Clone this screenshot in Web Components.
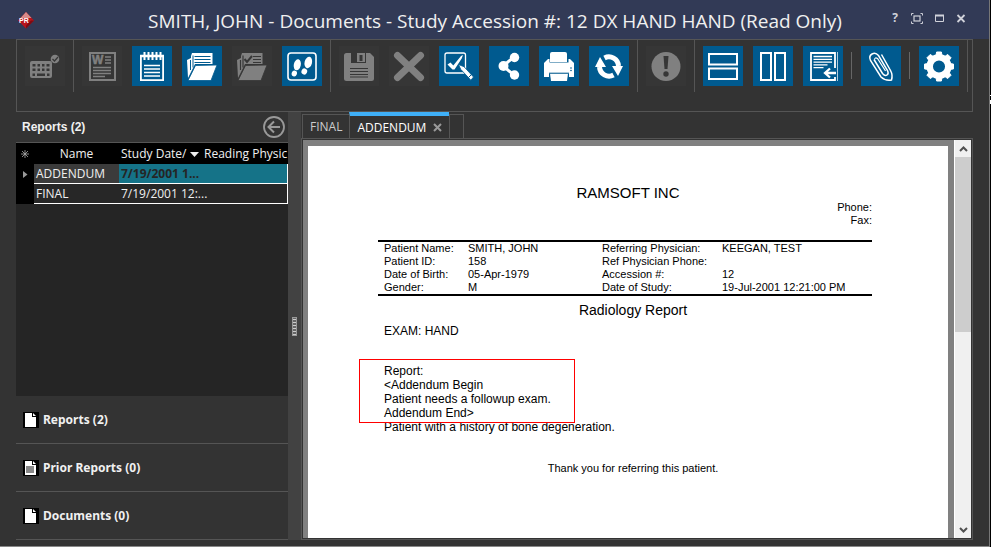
<!DOCTYPE html>
<html lang="en">
<head>
<meta charset="utf-8">
<title>SMITH, JOHN - Documents</title>
<style>
html, body { margin: 0; height: 100%; background: #000; }
body { font-family: "Open Sans", "Noto Sans", sans-serif; color: #f0f0f0; }
</style>
</head>
<body>
<document-window></document-window>

<script>
const define = (name, html, init) => {
  const template = document.createElement('template');
  template.innerHTML = html;
  customElements.define(name, class extends HTMLElement {
    constructor() {
      super();
      this.attachShadow({ mode: 'open' }).append(template.content.cloneNode(true));
    }
    connectedCallback() {
      if (init) init(this, this.shadowRoot);
    }
  });
};

/* Toolbar glyphs on a 40 x 40 grid; var(--bg) is the button's own fill. */
const ICONS = {
  keyboard: `<rect x="5" y="15" width="22" height="17" rx="2" fill="currentColor"/>
    <path d="M7.500 18h3v2.500h-3zM12.500 18h2.500v2.500h-2.500zM17 18h2.500v2.500h-2.500zM21.500 18h3v2.500h-3zM7.500 22.500h3V25h-3zM12.500 22.500h2.500V25h-2.500zM17 22.500h2.500V25h-2.500zM21.500 22.500h3V25h-3zM7.500 27.500h2.500V30h-2.500zM12 27.500h8V30h-8zM22 27.500h2.500V30h-2.500z" fill="var(--bg)"/>
    <circle cx="30" cy="13" r="4.300" fill="currentColor"/><path d="M27.500 13l2 2 3.500-4" fill="none" stroke="var(--bg)" stroke-width="1.200"/>`,
  word: `<rect x="8" y="7" width="25" height="27" fill="none" stroke="currentColor" stroke-width="2"/>
    <text x="10" y="18" font-family="Liberation Sans, sans-serif" font-weight="700" font-size="12" fill="currentColor" stroke="currentColor" stroke-width=".5">W</text>
    <path d="M23 11h6M23 14h6M23 17h6M11 21.500h18M11 24.500h18M11 27.500h18M11 30.500h12" stroke="currentColor" stroke-width="1.500"/>`,
  notepad: `<path d="M8.900 9v25.100h22.200V9" fill="none" stroke="currentColor" stroke-width="1.800"/><path d="M8 10h24" stroke="currentColor" stroke-width="2.500"/>
    <path d="M12.500 6v8M16.500 6v8M20.500 6v8M24.500 6v8M28.500 6v8" stroke="currentColor" stroke-width="2"/>
    <path d="M12 19.500h16M12 23h16M12 26.500h16M12 30h16" stroke="currentColor" stroke-width="1.500"/>`,
  folder: `<path d="M5 14l4-2v-2l1-3h20.500v11H13L6 32z" fill="currentColor"/>
    <path d="M8.500 14v10M11 9.500v12M12.500 10.500h16M12.500 13.500h16M12.500 16.500h16" stroke="var(--bg)" stroke-width="1"/>
    <path d="M6 34.500l7.500-15 21.500-.5-6 15.500z" fill="currentColor" stroke="var(--bg)" stroke-width=".8"/>`,
  foldercheck: `<path d="M5 14l4-2v-2l1-3h20.500v11H13L6 32z" fill="currentColor"/>
    <path d="M8.500 14v10M11 9.500v12M21 10.500h8M21 13.500h8M21 16.500h8" stroke="var(--bg)" stroke-width="1.200"/><path d="M12.500 13l2.500 3 5-6" fill="none" stroke="var(--bg)" stroke-width="2"/>
    <path d="M6 34.500l7.500-15 21.500-.5-6 15.500z" fill="currentColor" stroke="var(--bg)" stroke-width=".8"/>`,
  steps: `<rect x="6" y="7" width="28" height="27" rx="3" fill="none" stroke="currentColor" stroke-width="1.600"/>
    <g fill="currentColor"><ellipse cx="15.300" cy="18.800" rx="3.500" ry="5.600" transform="rotate(12 15.300 18.800)"/><ellipse cx="12.300" cy="27.500" rx="2.600" ry="3" transform="rotate(20 12.300 27.500)"/>
    <ellipse cx="26.300" cy="16.500" rx="3.700" ry="5.800" transform="rotate(14 26.300 16.500)"/><ellipse cx="22.300" cy="25.500" rx="2.800" ry="3.100" transform="rotate(24 22.300 25.500)"/></g>`,
  save: `<path d="M7.500 7H12v10h15V7h4L35 11v21.500q0 2.500-2.500 2.500h-25Q5 35 5 32.500v-23Q5 7 7.500 7z" fill="currentColor"/>
    <rect x="18" y="7" width="8" height="9" fill="currentColor"/><rect x="20.500" y="9" width="3" height="6" fill="var(--bg)"/>
    <path d="M11 22.500h18M11 25.500h18M11 28.500h18M11 31h18" stroke="var(--bg)" stroke-width="1.200"/>`,
  cross: `<path d="M8.500 9.500l23 22M31.500 9.500l-23 22" stroke="currentColor" stroke-width="7" stroke-linecap="round"/>`,
  review: `<rect x="6" y="7" width="20.500" height="20" rx="2" fill="none" stroke="currentColor" stroke-width="1.300"/>
    <path d="M8.500 18.500l3-2 2.800 3L22 10l2-1-1.300 3.500-7.200 11h-2z" fill="currentColor"/>
    <path d="M19.500 18.500l5.500 2.200 9.500 10.300-2.600 3.200L21.700 23.300z" fill="currentColor" stroke="var(--bg)" stroke-width=".8"/><path d="M29.500 31.500l3-3" stroke="var(--bg)" stroke-width="1"/>`,
  share: `<path d="M25 11L14 20l11 9" fill="none" stroke="currentColor" stroke-width="3"/><g fill="currentColor"><circle cx="25.500" cy="11.500" r="4.700"/><circle cx="14.500" cy="20" r="5"/><circle cx="25.500" cy="29" r="4.700"/></g>`,
  print: `<path d="M11 16V8q0-2 2-2h13q2 0 2 2v8z" fill="currentColor"/>
    <path d="M5 31V17l4-4h1.500v3.500h19V13H31l4 4v14h-5v-3.500H10V31z" fill="currentColor"/><path d="M11 27.500h18l-1 7.500H12z" fill="currentColor"/><path d="M10 27.200h20" stroke="var(--bg)"/>
    <circle cx="32" cy="22" r=".8" fill="var(--bg)"/><circle cx="32" cy="24.500" r=".8" fill="var(--bg)"/>`,
  refresh: `<path d="M15.500 12A9.600 9.600 0 0 1 29.500 20M24.500 29A9.600 9.600 0 0 1 10.500 21" fill="none" stroke="currentColor" stroke-width="5"/>
    <path d="M11 11L6 21h11zM29 30l5-10H23z" fill="currentColor"/>`,
  alert: `<circle cx="20" cy="20.500" r="14.500" fill="currentColor"/><path d="M17.500 10h5l-1 13h-3z" fill="var(--bg)"/><circle cx="20" cy="28" r="2.700" fill="var(--bg)"/>`,
  rows: `<path d="M6 8h28v10.500H6zM6 22.500h28V33H6z" fill="none" stroke="currentColor" stroke-width="2"/>`,
  columns: `<path d="M8 7h10v27H8zM22 7h10v27H22z" fill="none" stroke="currentColor" stroke-width="2"/>`,
  import: `<path d="M32 22V7H8v27h24v-3" fill="none" stroke="currentColor" stroke-width="1.800"/><path d="M34.500 6v29" stroke="currentColor" stroke-width=".7"/>
    <path d="M10.500 10.500h18.500M10.500 13.300h18.500M10.500 16.100h18.500M10.500 18.900h14M10.500 21.700h10" stroke="currentColor" stroke-width="1.300"/>
    <path d="M33 27H22.500M27 22.500L22 27l5 4.500" fill="none" stroke="currentColor" stroke-width="2.300"/>`,
  clip: `<path d="M13 13.500l8.500 14q2.500 3 4.500 1.500t.5-4.500L17.500 9.500Q14.500 6 11 8t-1.500 6.500L20 31q4 4 10.500 3 1.500-5-1-9.500L20.500 8.500" fill="none" stroke="currentColor" stroke-width="1.500"/>
    <path d="M13.500 13.500q.5-2.500 3-1l8 12.500" fill="none" stroke="currentColor" stroke-width="1.200"/>`,
  gear: `<circle cx="20" cy="20.500" r="9.300" fill="none" stroke="currentColor" stroke-width="6.500"/>
    <path d="M17 10l.6-4h4.800l.6 4zM17 31l.6 4h4.800l.6-4zM9.500 17.500l-4 .6v4.800l4 .6zM30.500 17.500l4 .6v4.800l-4 .6zM10.300 15l-2.400-3.200 3.400-3.400 3.200 2.400zM29.700 15l2.400-3.200-3.400-3.400-3.200 2.400zM10.300 26l-2.400 3.200 3.400 3.400 3.200-2.400zM29.700 26l2.400 3.200-3.400 3.400-3.200-2.400z" fill="currentColor" stroke="currentColor"/>`
};

define('tool-button', `
<style>
:host { display: block; width: 40px; height: 40px; --bg: #005a8f; color: #fff; }
:host([disabled]) { --bg: #363636; color: #808080; }
button { display: block; width: 100%; height: 100%; padding: 0; border: 0; background: var(--bg); color: inherit; }
svg { display: block; width: 40px; height: 40px; }
</style>
<button type="button"><svg viewBox="0 0 40 40" aria-hidden="true"></svg></button>`,
(host, root) => {
  root.querySelector('svg').innerHTML = ICONS[host.getAttribute('icon')];
  const button = root.querySelector('button');
  button.setAttribute('aria-label', host.getAttribute('label'));
  button.disabled = host.hasAttribute('disabled');
});

define('tool-group', `
<style>
:host { display: flex; gap: 10px; height: 46px; padding: 6px 8px 0; border-right: 1px solid #555; }
</style><slot></slot>`);

define('tool-divider', `
<style>
:host { display: block; width: 1px; height: 27px; margin: 6px -1px 0 -2px; background: #666; }
</style>`);

define('tool-ribbon', `
<style>
:host { display: flex; height: 71px; border: 1px solid #555; overflow: hidden; }
</style>
<tool-group><tool-button icon="keyboard" label="Dictation keys" disabled></tool-button></tool-group>
<tool-group>
  <tool-button icon="word" label="Open in Word" disabled></tool-button>
  <tool-button icon="notepad" label="Notes"></tool-button>
  <tool-button icon="folder" label="Open study"></tool-button>
  <tool-button icon="foldercheck" label="Complete study" disabled></tool-button>
  <tool-button icon="steps" label="Workflow"></tool-button>
</tool-group>
<tool-group>
  <tool-button icon="save" label="Save" disabled></tool-button>
  <tool-button icon="cross" label="Delete" disabled></tool-button>
  <tool-button icon="review" label="Sign"></tool-button>
  <tool-button icon="share" label="Share"></tool-button>
  <tool-button icon="print" label="Print"></tool-button>
  <tool-button icon="refresh" label="Refresh"></tool-button>
</tool-group>
<tool-group><tool-button icon="alert" label="Priority" disabled></tool-button></tool-group>
<tool-group>
  <tool-button icon="rows" label="Split rows"></tool-button>
  <tool-button icon="columns" label="Split columns"></tool-button>
  <tool-button icon="import" label="Import"></tool-button>
  <tool-divider></tool-divider>
  <tool-button icon="clip" label="Attach"></tool-button>
  <tool-divider></tool-divider>
  <tool-button icon="gear" label="Settings"></tool-button>
</tool-group>`);

define('title-bar', `
<style>
:host { display: grid; grid-template-columns: 1fr auto 1fr; align-items: center; height: 39px; padding: 0 20px 0 17px; background: #323a56; }
h1 { margin: 0; font-size: 19px; line-height: 28px; font-weight: 400; padding: 2px 0 0 4px; white-space: nowrap; }
.logo { display: block; width: 18px; height: 18px; }
.controls { display: flex; justify-content: flex-end; gap: 6px; padding-bottom: 3px; }
.controls button { display: block; width: 16px; height: 16px; padding: 0; border: 0; background: none; color: #d0d2da; font: 700 12px/16px "Open Sans", sans-serif; }
.controls svg { display: block; width: 16px; height: 16px; }
</style>
<svg class="logo" viewBox="0 0 18 18" aria-hidden="true">
  <path d="M9 1l8 8.500L9 17.500 1 9.500z" fill="#b8141c"/><path d="M9 1l5.500 6H3.500z" fill="#d88a88"/><path d="M9 17.500l8-8-3 0-5 5z" fill="#7d0b12"/>
  <text x="2" y="12" font-family="Liberation Sans, sans-serif" font-size="7" font-weight="700" fill="#fff">PR</text>
</svg>
<h1>SMITH, JOHN - Documents - Study Accession #: 12 DX HAND HAND (Read Only)</h1>
<div class="controls">
  <button type="button" aria-label="Help">?</button>
  <button type="button" aria-label="Full screen"><svg viewBox="0 0 16 16" fill="none" stroke="currentColor"><path d="M4.500 3.500h-2v2M11.500 3.500h2v2M4.500 13.500h-2v-2M11.500 13.500h2v-2"/><rect x="5" y="6" width="6" height="5" stroke-width="1.200"/></svg></button>
  <button type="button" aria-label="Maximize"><svg viewBox="0 0 16 16" fill="none" stroke="currentColor"><path d="M4.500 5.500h8v6h-8z"/><path d="M4 5.500h9" stroke-width="2"/></svg></button>
  <button type="button" aria-label="Close"><svg viewBox="0 0 16 16" stroke="currentColor" stroke-width="1.800"><path d="M4.500 5l7 7M11.500 5l-7 7"/></svg></button>
</div>`);

define('panel-header', `
<style>
:host { display: flex; align-items: center; justify-content: space-between; height: 30px; padding: 0 3px 0 6px; border-bottom: 1px solid #555; }
h2 { margin: 0; font: 700 12px/16px "Liberation Sans", sans-serif; }
button { display: block; padding: 0; border: 0; background: none; color: #999; }
svg { display: block; width: 22px; height: 22px; }
</style>
<h2><slot></slot></h2>
<button type="button" aria-label="Collapse panel"><svg viewBox="0 0 22 22" fill="none" stroke="currentColor"><circle cx="11" cy="11" r="10" stroke-width="1.800"/><path d="M17 11H6M11 5.500L5.500 11l5.500 5.500" stroke-width="2"/></svg></button>`);

define('report-grid', `
<style>
:host { display: block; flex: 1; background: #252525; }
table { width: 100%; table-layout: fixed; border-collapse: separate; border-spacing: 0; font-size: 12px; line-height: 18px; }
th, td { height: 19px; padding: 0 0 0 2px; font-weight: 400; text-align: left; white-space: nowrap; box-sizing: border-box; }
thead th { height: 21px; background: #000; }
thead th:last-child { padding-left: 1px; }
thead .name { text-align: center; padding: 0; }
tbody th, .mark { background: #000; text-align: center; padding: 0; color: #aaa; }
tbody td { height: 20px; border-bottom: 1px solid #fff; background: #272727; }
tbody td:last-child { border-right: 1px solid #fff; }
.active td { background: #157388; }
.active td.first { background: #3b3b3b; }
.active .date { color: #252525; font-weight: 700; }
svg { vertical-align: middle; }
</style>
<table>
  <colgroup><col style="width:18px"><col style="width:85px"><col style="width:84px"><col></colgroup>
  <thead><tr>
    <th class="mark" aria-label="Row state"><svg width="8" height="8" viewBox="0 0 8 8" stroke="#aaa" stroke-width=".8"><path d="M4 0v8M0 4h8M1 1l6 6M7 1L1 7"/></svg></th>
    <th class="name">Name</th>
    <th>Study Date/ <svg width="9" height="5" viewBox="0 0 9 5"><path d="M0 0h9L4.500 5z" fill="#eee"/></svg></th>
    <th>Reading Physic</th>
  </tr></thead>
  <tbody>
    <tr class="active"><th aria-label="Current row"><svg width="5" height="7" viewBox="0 0 5 7"><path d="M0 0l4.500 3.500L0 7z" fill="#999"/></svg></th><td class="first">ADDENDUM</td><td class="date">7/19/2001 1...</td><td></td></tr>
    <tr><th aria-label="Row"></th><td class="first">FINAL</td><td class="date">7/19/2001 12:...</td><td></td></tr>
  </tbody>
</table>`);

define('nav-item', `
<style>
:host { display: block; border-bottom: 1px solid #555; }
button { display: flex; align-items: center; gap: 4px; width: 100%; height: 47px; padding: 0 7px; border: 0; background: none; color: inherit; font: 700 12px/16px "Noto Sans", sans-serif; text-align: left; }
svg { display: block; width: 16px; height: 16px; }
.fill { display: none; }
:host([filled]) .fill { display: block; }
</style>
<button type="button"><svg viewBox="0 0 16 16" aria-hidden="true"><path d="M0 0h16v16H0z" fill="#000"/><path d="M2 1h7v4h4v10H2z" fill="#fff"/><path d="M10 1l3 3h-3z" fill="#fff"/><path class="fill" d="M3 6h8v7H3z" fill="#888"/></svg><slot></slot></button>`);

define('side-panel', `
<style>
:host { display: flex; flex-direction: column; }
</style>
<panel-header>Reports (2)</panel-header>
<report-grid></report-grid>
<nav>
  <nav-item>Reports (2)</nav-item>
  <nav-item filled>Prior Reports (0)</nav-item>
  <nav-item>Documents (0)</nav-item>
</nav>`);

define('split-handle', `
<style>
:host { display: flex; align-items: center; justify-content: center; background: #424242; }
i { display: block; width: 3px; height: 17px; border: 1px solid #999; background: repeating-linear-gradient(#666 0 1px, #ccc 1px 2px, #666 2px 3px); }
</style><i></i>`);

define('tab-strip', `
<style>
:host { display: flex; height: 26px; padding-left: 1px; }
.tab, .stub { box-sizing: border-box; border: 1px solid #555; border-bottom: 0; border-right: 0; margin-top: 2px; }
.tab { display: flex; align-items: center; padding: 0 7px; }
.stub { width: 15px; border-right: 1px solid #555; }
.on { margin: 0 0 -1px; border-top: 4px solid #3fb0f8; background: #333; }
.on .name { color: #fff; }
button { display: block; padding: 0; border: 0; background: none; color: #ccc; font: 400 12px/20px "Open Sans", sans-serif; }
.close { margin-left: 7px; color: #999; }
svg { display: block; width: 9px; height: 9px; }
</style>
<div class="tab"><button type="button" class="name">FINAL</button></div>
<div class="tab on"><button type="button" class="name">ADDENDUM</button><button type="button" class="close" aria-label="Close tab"><svg viewBox="0 0 9 9" stroke="currentColor" stroke-width="2"><path d="M1 1l7 7M8 1L1 8"/></svg></button></div>
<div class="stub"></div>`);

define('report-page', `
<style>
:host { display: block; background: #fff; color: #000; padding: 38px 76px 0 70px; font: 11px/13px "Liberation Sans", sans-serif; overflow: hidden; }
h3, h4, p { margin: 0; font-weight: 400; }
h3, h4 { text-align: center; }
h3 { font-size: 15px; line-height: 17px; padding-left: 6px; }
h4 { font-size: 14px; line-height: 18px; padding: 5px 0 5px 16px; }
.contact { text-align: right; padding-bottom: 13px; }
table { width: 100%; table-layout: fixed; border-collapse: collapse; border-top: 2px solid #000; border-bottom: 2px solid #000; }
th, td { padding: 0; text-align: left; font-weight: 400; white-space: nowrap; }
th:first-child { padding-left: 6px; }
.text { padding-left: 6px; font-size: 12px; line-height: 14px; }
.body { position: relative; margin-top: 26px; }
.mark { position: absolute; left: -25px; top: -5px; width: 214px; height: 62px; border: 1px solid #f00; }
.thanks { text-align: center; margin-top: 28px; padding-left: 16px; }
</style>
<h3>RAMSOFT INC</h3>
<p class="contact">Phone:<br>Fax:</p>
<table>
  <colgroup><col style="width:90px"><col style="width:134px"><col style="width:120px"><col></colgroup>
  <tr><th>Patient Name:</th><td>SMITH, JOHN</td><th>Referring Physician:</th><td>KEEGAN, TEST</td></tr>
  <tr><th>Patient ID:</th><td>158</td><th>Ref Physician Phone:</th><td></td></tr>
  <tr><th>Date of Birth:</th><td>05-Apr-1979</td><th>Accession #:</th><td>12</td></tr>
  <tr><th>Gender:</th><td>M</td><th>Date of Study:</th><td>19-Jul-2001 12:21:00 PM</td></tr>
</table>
<h4>Radiology Report</h4>
<div class="text">
  <p>EXAM: HAND</p>
  <div class="body">
    <span class="mark"></span>
    <p>Report:</p>
    <p>&lt;Addendum Begin</p>
    <p>Patient needs a followup exam.</p>
    <p>Addendum End&gt;</p>
    <p>Patient with a history of bone degeneration.</p>
  </div>
</div>
<p class="thanks">Thank you for referring this patient.</p>`);

define('page-scrollbar', `
<style>
:host { display: flex; flex-direction: column; justify-content: space-between; box-sizing: border-box; width: 17px; background: #f0f0f0; border-left: 1px solid #fff; }
button { display: block; width: 100%; height: 17px; padding: 0; border: 0; background: none; }
svg { display: block; margin: auto; width: 9px; height: 6px; }
.track { flex: 1; }
.thumb { height: 48%; background: #cdcdcd; }
</style>
<button type="button" aria-label="Scroll up"><svg viewBox="0 0 9 6" fill="none" stroke="#505050" stroke-width="2"><path d="M1 5l3.500-3.500L8 5"/></svg></button>
<div class="track"><div class="thumb"></div></div>
<button type="button" aria-label="Scroll down"><svg viewBox="0 0 9 6" fill="none" stroke="#505050" stroke-width="2"><path d="M1 1l3.500 3.500L8 1"/></svg></button>`);

define('document-viewer', `
<style>
:host { display: flex; flex-direction: column; min-width: 0; }
.frame { flex: 1; display: flex; border: 1px solid #555; padding: 1px; }
.canvas { flex: 1; display: flex; padding: 6px 6px 0 5px; background: #808080; }
report-page { flex: 1; }
</style>
<tab-strip></tab-strip>
<div class="frame"><div class="canvas"><report-page></report-page></div><page-scrollbar></page-scrollbar></div>`);

define('document-window', `
<style>
:host { display: flex; min-height: 100vh; }
.window { flex: 1; display: flex; flex-direction: column; min-width: 0; background: #333; border-right: 1px solid #777; border-bottom: 1px solid #888; }
.edge { width: 1px; background: linear-gradient(#000 95px, #fff 95px 96px, #000 96px 100px, #fff 100px 104px, #000 104px); }
tool-ribbon { margin: 0 16px; }
main { flex: 1; display: grid; grid-template-columns: 272px 13px 1fr; padding: 0 16px 6px; }
</style>
<div class="window">
  <title-bar></title-bar>
  <tool-ribbon></tool-ribbon>
  <main><side-panel></side-panel><split-handle></split-handle><document-viewer></document-viewer></main>
</div>
<div class="edge"></div>`);
</script>
</body>
</html>
